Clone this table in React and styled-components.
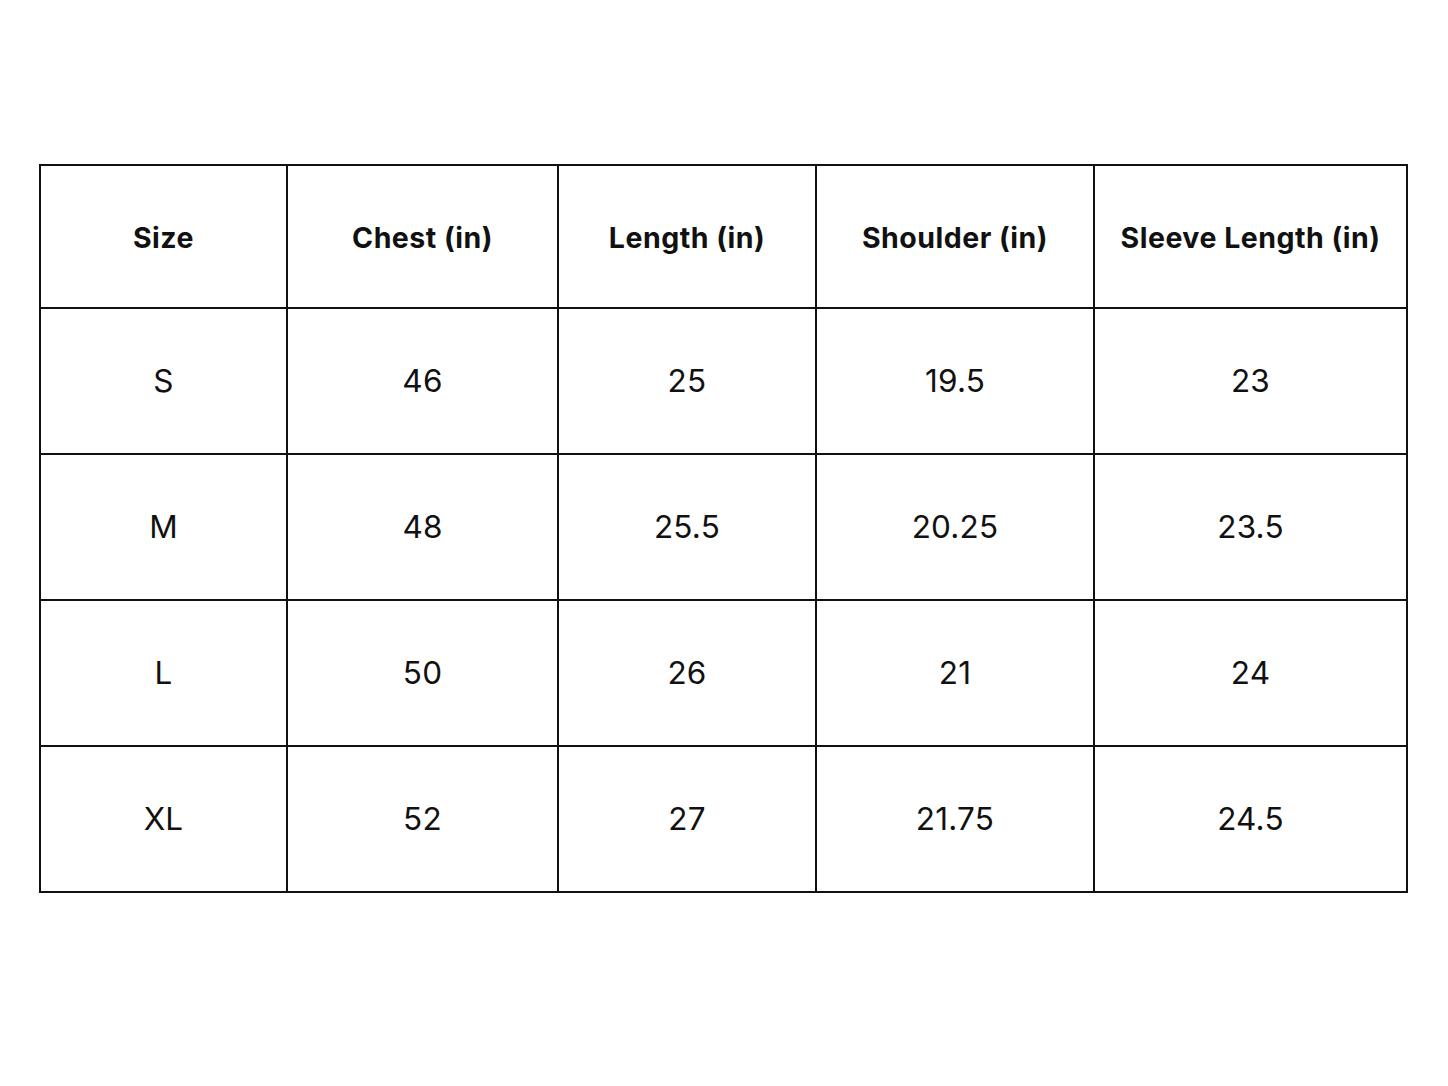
import React from "react";
import styled, { createGlobalStyle } from "styled-components";

const GlobalStyle = createGlobalStyle`
  html, body {
    margin: 0;
    padding: 0;
    background: #ffffff;
  }
  body {
    font-family: Inter, "Noto Sans", sans-serif;
    color: #111111;
  }
`

const PageStyled = styled.main`
  width: 1448px;
  height: 1086px;
  padding: 164px 0 0 39px;
  box-sizing: border-box;
`

const TableStyled = styled.div`
  display: grid;
  grid-template-columns: 247px 271px 258px 278px 313px;
  grid-template-rows: 143px repeat(4, 146px);
  width: 1369px;
  border-top: 2px solid #111;
  border-left: 2px solid #111;
  box-sizing: border-box;
`

const CellStyled = styled.div`
  display: flex;
  align-items: center;
  justify-content: center;
  border-right: 2px solid #111;
  border-bottom: 2px solid #111;
  font-size: ${(p) => (p.$head ? "28.5px" : "31.5px")};
  font-weight: ${(p) => (p.$head ? 700 : 400)};
  letter-spacing: ${(p) => (p.$head ? "0.5px" : "0.2px")};
  padding: ${(p) => (p.$head ? "2px 0 0" : "0 0 2px")};
`

const headers = ["Size", "Chest (in)", "Length (in)", "Shoulder (in)", "Sleeve Length (in)"];

const rows = [
  ["S", "46", "25", "19.5", "23"],
  ["M", "48", "25.5", "20.25", "23.5"],
  ["L", "50", "26", "21", "24"],
  ["XL", "52", "27", "21.75", "24.5"],
];

function App() {
  return (
    <>
      <GlobalStyle />
      <PageStyled>
        <TableStyled>
          {headers.map((h) => (
            <CellStyled $head key={h}>{h}</CellStyled>
          ))}
          {rows.map((row) =>
            row.map((val, i) => <CellStyled key={row[0] + i}>{val}</CellStyled>)
          )}
        </TableStyled>
      </PageStyled>
    </>
  );
}

export default App;
